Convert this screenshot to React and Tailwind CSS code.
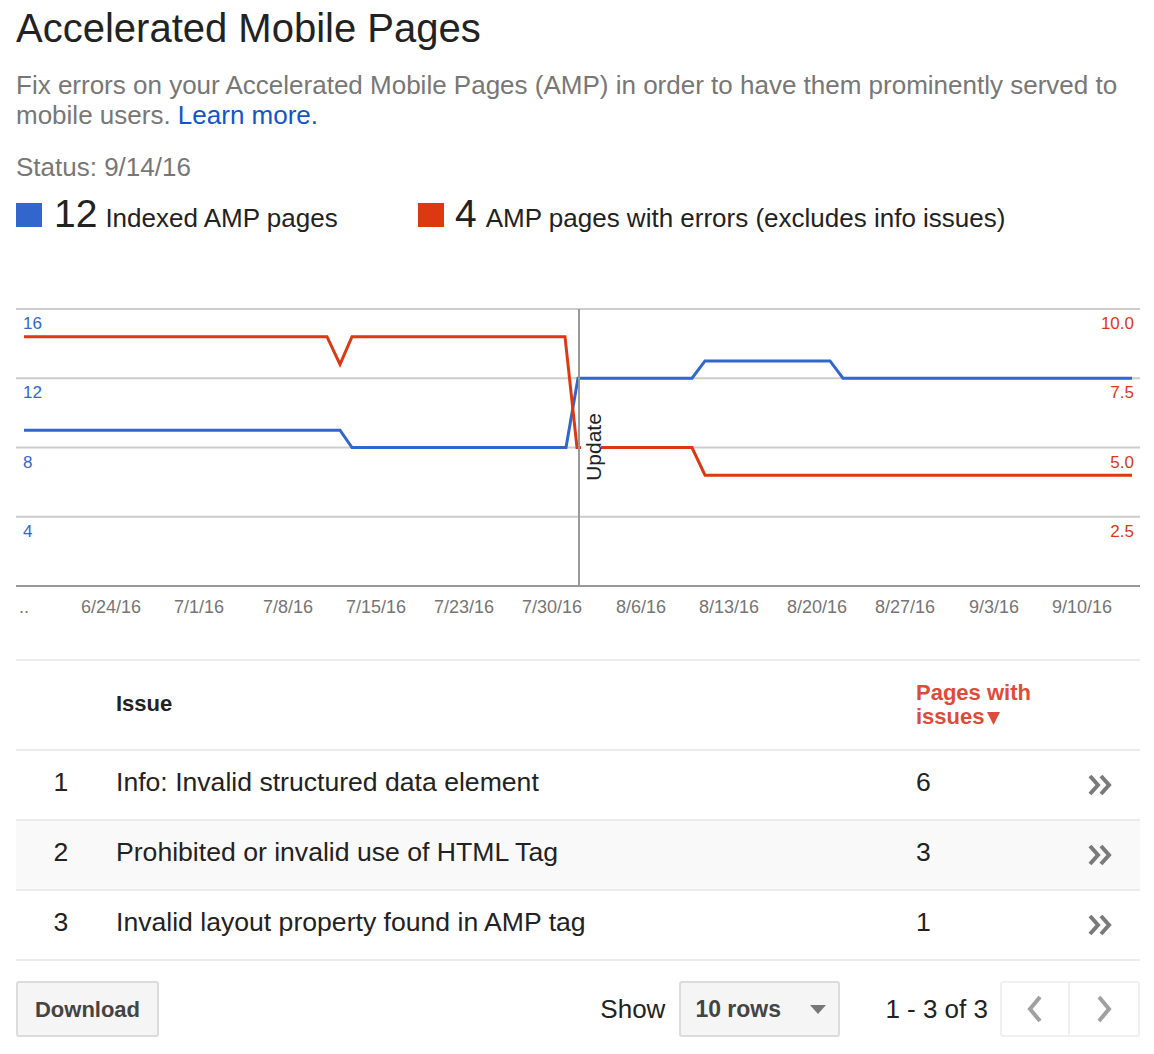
import React from "react";

const BLUE = "#3366cc";
const RED = "#dc3912";

const xLabels = [
  ["6/24/16", 111],
  ["7/1/16", 199],
  ["7/8/16", 288],
  ["7/15/16", 376],
  ["7/23/16", 464],
  ["7/30/16", 552],
  ["8/6/16", 641],
  ["8/13/16", 729],
  ["8/20/16", 817],
  ["8/27/16", 905],
  ["9/3/16", 994],
  ["9/10/16", 1082],
];

const grid = [309, 378.25, 447.5, 516.75];

const issues = [
  { n: 1, text: "Info: Invalid structured data element", count: 6 },
  { n: 2, text: "Prohibited or invalid use of HTML Tag", count: 3 },
  { n: 3, text: "Invalid layout property found in AMP tag", count: 1 },
];

function Chart() {
  return (
    <svg
      className="block"
      width="1124"
      height="425"
      viewBox="16 234 1124 425"
      style={{ fontFamily: "'Liberation Sans', Arial, sans-serif" }}
    >
      {grid.map((y) => (
        <line key={y} x1="16" x2="1140" y1={y} y2={y} stroke="#cccccc" strokeWidth="2" />
      ))}
      <line x1="16" x2="1140" y1="586" y2="586" stroke="#999999" strokeWidth="2" />

      <polyline
        fill="none"
        stroke={BLUE}
        strokeWidth="3"
        points="24,430.2 340,430.2 352,447.5 566,447.5 578,378.25 692,378.25 705,360.9 830,360.9 843,378.25 1132,378.25"
      />
      <polyline
        fill="none"
        stroke={RED}
        strokeWidth="3"
        points="24,336.7 327,336.7 340,364.4 352,336.7 565,336.7 577,447.5 692,447.5 705,475.2 1132,475.2"
      />

      <rect x="581" y="406" width="20" height="82" fill="#ffffff" />
      <text
        transform="translate(601,447) rotate(-90)"
        textAnchor="middle"
        fontSize="21"
        fill="#222222"
      >
        Update
      </text>
      <line x1="579" x2="579" y1="309" y2="586" stroke="#999999" strokeWidth="2" />

      {["16", "12", "8", "4"].map((t, i) => (
        <text key={t} x="23" y={329 + i * 69.25} fontSize="17" fill={BLUE}>
          {t}
        </text>
      ))}
      {["10.0", "7.5", "5.0", "2.5"].map((t, i) => (
        <text key={t} x="1134" y={329 + i * 69.25} fontSize="17" fill={RED} textAnchor="end">
          {t}
        </text>
      ))}

      <text x="19" y="613" fontSize="18" fill="#757575">
        ..
      </text>
      {xLabels.map(([t, x]) => (
        <text key={t} x={x} y="613" fontSize="18" fill="#757575" textAnchor="middle">
          {t}
        </text>
      ))}
    </svg>
  );
}

function DoubleChevron() {
  return (
    <svg width="26" height="24" viewBox="0 0 26 24">
      <polyline points="3,3 11,12 3,21" fill="none" stroke="#7a7a7a" strokeWidth="4" />
      <polyline points="14,3 22,12 14,21" fill="none" stroke="#7a7a7a" strokeWidth="4" />
    </svg>
  );
}

export default function App() {
  return (
    <div className="bg-white min-h-screen pl-4 pr-[14px] font-['Liberation_Sans',Arial,sans-serif]">
      <h1 className="pt-[5px] text-[40px] leading-[46px] text-[#222] font-normal">
        Accelerated Mobile Pages
      </h1>
      <p className="mt-[19px] text-[26px] leading-[30px] text-[#777]">
        Fix errors on your Accelerated Mobile Pages (AMP) in order to have them prominently served to
        mobile users. <span className="text-[#1155cc]">Learn more.</span>
      </p>
      <p className="mt-[22px] text-[26px] leading-[30px] text-[#777]">Status: 9/14/16</p>

      <div className="mt-[12px] flex items-baseline text-[#222]">
        <div className="flex items-baseline w-[402px]">
          <div className="w-[26px] h-[24px] bg-[#3366cc]" />
          <span className="ml-[12px] text-[39px] leading-[40px]">12</span>
          <span className="ml-[8px] text-[26px] leading-[30px]">Indexed AMP pages</span>
        </div>
        <div className="flex items-baseline">
          <div className="w-[26px] h-[24px] bg-[#dc3912]" />
          <span className="ml-[11px] text-[39px] leading-[40px]">4</span>
          <span className="ml-[9px] text-[26px] leading-[30px]">
            AMP pages with errors (excludes info issues)
          </span>
        </div>
      </div>

      <Chart />

      <div className="text-[#222]">
        <div className="flex items-center h-[90px] border-t-2 border-[#ebebeb]">
          <div className="w-[90px]" />
          <div className="w-[810px] pl-[10px] mb-[4px] text-[22px] font-bold">Issue</div>
          <div className="w-[144px] text-[22px] leading-[24px] font-bold text-[#dd4b39]">
            Pages with
            <br />
            issues
            <svg className="inline-block ml-[2px] align-[-1px]" width="13" height="14" viewBox="0 0 13 14">
              <polygon points="0,1 13,1 6.5,14" fill="#dd4b39" />
            </svg>
          </div>
        </div>
        {issues.map((r, i) => (
          <div
            key={r.n}
            className={
              "flex items-center h-[70px] pb-[6px] border-t-2 border-[#ebebeb] text-[26.6px] leading-[30px] " +
              (i === 1 ? "bg-[#f9f9f9] " : "") +
              (i === 2 ? "h-[72px] border-b-2" : "")
            }
          >
            <div className="w-[90px] text-center">{r.n}</div>
            <div className="w-[810px] pl-[10px]">{r.text}</div>
            <div className="w-[144px]">{r.count}</div>
            <div className="w-[80px] flex justify-center mt-[6px]">
              <DoubleChevron />
            </div>
          </div>
        ))}
      </div>

      <div className="mt-[20px] flex items-center h-[56px]">
        <button className="w-[143px] h-[56px] bg-[#f5f5f5] border-2 border-[#dcdcdc] rounded-[3px] text-[22px] font-bold text-[#444]">
          Download
        </button>
        <div className="flex-1" />
        <span className="text-[26px] text-[#222] mr-[14px]">Show</span>
        <div className="w-[161px] h-[56px] bg-[#f5f5f5] border-2 border-[#dcdcdc] rounded-[3px] flex items-center justify-between pl-[14px] pr-[12px]">
          <span className="text-[23px] font-bold text-[#444]">10 rows</span>
          <svg width="16" height="9" viewBox="0 0 16 9">
            <polygon points="0,0 16,0 8,9" fill="#777" />
          </svg>
        </div>
        <span className="ml-[45px] text-[26px] text-[#222]">1 - 3 of 3</span>
        <div className="ml-[12px] flex h-[56px] border-2 border-[#f0f0f0] rounded-[3px]">
          <div className="w-[68px] flex items-center justify-center border-r-2 border-[#f0f0f0]">
            <svg width="16" height="28" viewBox="0 0 16 28">
              <polyline points="13,2 3,14 13,26" fill="none" stroke="#a0a0a0" strokeWidth="4" />
            </svg>
          </div>
          <div className="w-[68px] flex items-center justify-center">
            <svg width="16" height="28" viewBox="0 0 16 28">
              <polyline points="3,2 13,14 3,26" fill="none" stroke="#a0a0a0" strokeWidth="4" />
            </svg>
          </div>
        </div>
      </div>
    </div>
  );
}
